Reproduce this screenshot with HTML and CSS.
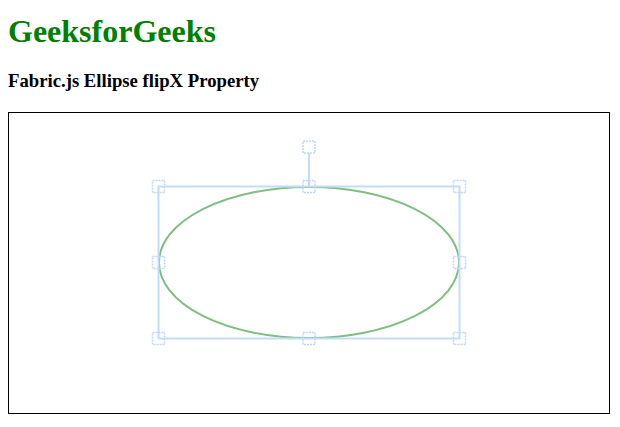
FILE: index.html
```html
<!DOCTYPE html>
<html>
<head>
<meta charset="utf-8">
<link rel="stylesheet" href="styles.css">
</head>
<body>
<h1 class="brand">GeeksforGeeks</h1>
<h3 class="subtitle">Fabric.js Ellipse flipX Property</h3>
<div class="canvas">
<svg width="600" height="300" viewBox="0 0 600 300" xmlns="http://www.w3.org/2000/svg">
  <ellipse cx="300" cy="149.5" rx="150" ry="75.5" fill="none" stroke="#7fbf7f" stroke-width="2"/>
  <g fill="none" stroke="#c3dcfb">
    <rect x="149.5" y="73.5" width="301" height="152" stroke-width="2"/>
    <line x1="300" y1="40" x2="300" y2="73" stroke-width="2"/>
  </g>
  <g fill="none" stroke="#bcd7fa" stroke-width="1.5" stroke-dasharray="2 1">
    <rect x="294" y="28" width="12" height="12"/>
    <rect x="143.5" y="67.5" width="12" height="12"/>
    <rect x="294" y="67.5" width="12" height="12"/>
    <rect x="444.5" y="67.5" width="12" height="12"/>
    <rect x="143.5" y="143.5" width="12" height="12"/>
    <rect x="444.5" y="143.5" width="12" height="12"/>
    <rect x="143.5" y="219.5" width="12" height="12"/>
    <rect x="294" y="219.5" width="12" height="12"/>
    <rect x="444.5" y="219.5" width="12" height="12"/>
  </g>
</svg>
</div>
</body>
</html>
```
FILE: styles.css
```css
html, body {
  margin: 0;
  padding: 0;
  background: #ffffff;
}
body {
  padding: 0 8px;
  font-family: "Liberation Serif", "Times New Roman", serif;
  color: #000;
}
.brand {
  margin: 13px 0 0;
  font-size: 32px;
  line-height: 36px;
  font-weight: bold;
  color: green;
}
.subtitle {
  margin: 21px 0 0;
  font-size: 18.72px;
  line-height: 22px;
  font-weight: bold;
}
.canvas {
  margin-top: 20px;
  width: 600px;
  height: 300px;
  border: 1px solid #000;
}
.canvas svg {
  display: block;
}
```
